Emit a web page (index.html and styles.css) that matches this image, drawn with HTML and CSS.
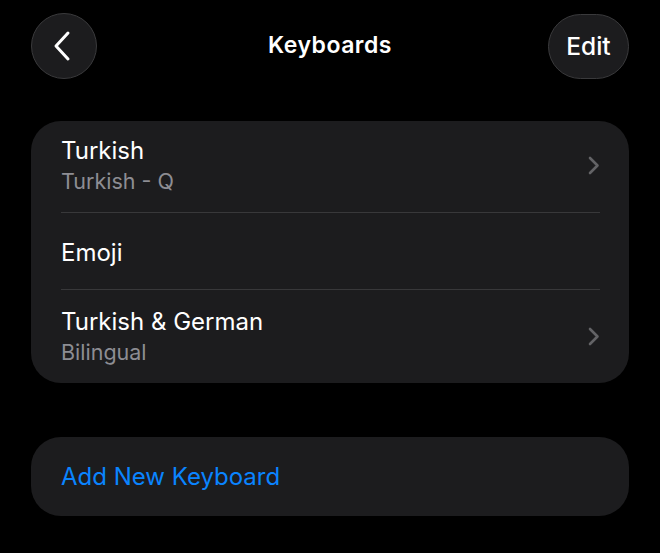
FILE: index.html
```html
<!DOCTYPE html>
<html>
<head>
<meta charset="utf-8">
<link rel="stylesheet" href="styles.css">
</head>
<body>
<div class="screen">
  <header class="nav">
    <button class="circle-btn" aria-label="Back">
      <svg width="20" height="32" viewBox="0 0 20 32"><path d="M16 3 L4 16 L16 29" fill="none" stroke="#fff" stroke-width="3" stroke-linecap="round" stroke-linejoin="round"/></svg>
    </button>
    <h1 class="title">Keyboards</h1>
    <button class="pill-btn">Edit</button>
  </header>

  <section class="card list">
    <div class="row tall">
      <div class="texts">
        <div class="primary">Turkish</div>
        <div class="secondary">Turkish - Q</div>
      </div>
      <svg class="chev" width="12" height="19" viewBox="0 0 12 19"><path d="M2 2 L9.5 9.5 L2 17" fill="none" stroke="#636366" stroke-width="2.6" stroke-linecap="round" stroke-linejoin="round"/></svg>
    </div>
    <div class="row short">
      <div class="texts">
        <div class="primary">Emoji</div>
      </div>
    </div>
    <div class="row tall last">
      <div class="texts">
        <div class="primary">Turkish &amp; German</div>
        <div class="secondary">Bilingual</div>
      </div>
      <svg class="chev" width="12" height="19" viewBox="0 0 12 19"><path d="M2 2 L9.5 9.5 L2 17" fill="none" stroke="#636366" stroke-width="2.6" stroke-linecap="round" stroke-linejoin="round"/></svg>
    </div>
  </section>

  <section class="card action">
    <span class="link">Add New Keyboard</span>
  </section>
</div>
</body>
</html>
```
FILE: styles.css
```css
html, body {
  margin: 0;
  padding: 0;
  background: #000;
  font-family: Inter, "Noto Sans", "DejaVu Sans", sans-serif;
  color: #fff;
}

.screen {
  width: 660px;
  height: 553px;
  box-sizing: border-box;
  padding: 13px 31px 0 31px;
  display: flex;
  flex-direction: column;
}

.nav {
  display: grid;
  grid-template-columns: 1fr auto 1fr;
  align-items: center;
  height: 66px;
}

.circle-btn {
  justify-self: start;
  width: 66px;
  height: 66px;
  border-radius: 50%;
  background: #1c1c1e;
  border: 1px solid #3a3a3c;
  display: flex;
  align-items: center;
  justify-content: center;
  padding: 0 4px 0 0;
  box-sizing: border-box;
}

.title {
  margin: 0 0 2px 0;
  font-size: 23px;
  font-weight: 600;
  letter-spacing: 0.5px;
}

.pill-btn {
  justify-self: end;
  width: 81px;
  height: 65px;
  border-radius: 33px;
  background: #1c1c1e;
  border: 1px solid #3a3a3c;
  color: #fff;
  font-family: inherit;
  font-size: 24.5px;
  font-weight: 500;
  padding: 0;
  box-sizing: border-box;
}

.card {
  background: #1c1c1e;
  border-radius: 30px;
}

.list {
  margin-top: 42px;
  padding-left: 30px;
  padding-right: 29px;
}

.row {
  display: flex;
  align-items: center;
  border-bottom: 1px solid #38383a;
  box-sizing: border-box;
}

.row.tall { height: 92px; padding-bottom: 2px; }
.row.short { height: 77px; padding-top: 3px; }
.row.last { border-bottom: none; height: 93px; padding-bottom: 0; }

.texts {
  flex: 1;
  display: flex;
  flex-direction: column;
  gap: 3px;
}

.primary {
  font-size: 24px;
  line-height: 29px;
  color: #fff;
}

.secondary {
  font-size: 21.5px;
  line-height: 27px;
  color: #8d8d93;
}

.chev {
  display: block;
}

.action {
  margin-top: 54px;
  height: 79px;
  display: flex;
  align-items: center;
  padding-left: 30px;
}

.link {
  color: #0a84ff;
  font-size: 24px;
}
```
